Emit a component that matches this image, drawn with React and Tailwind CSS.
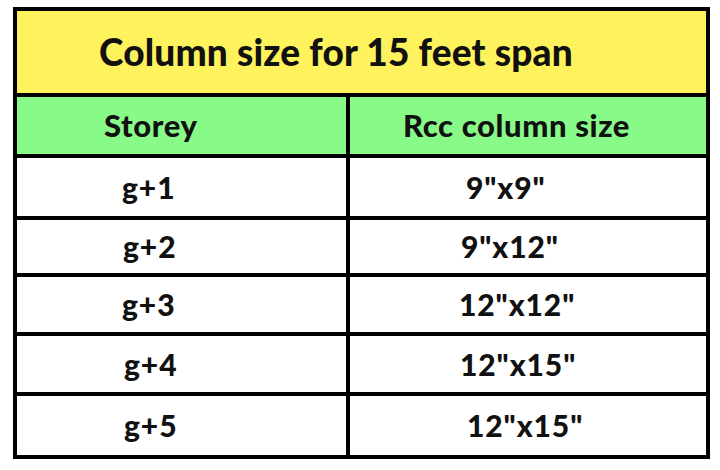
const rows = [
  { storey: "g+1", size: '9"x9"', h: "h-[62px]", p1: "pl-[105px]", p2: "pl-[116px]" },
  { storey: "g+2", size: '9"x12"', h: "h-[57px]", p1: "pl-[106px]", p2: "pl-[111px]" },
  { storey: "g+3", size: '12"x12"', h: "h-[59px]", p1: "pl-[105px]", p2: "pl-[109px]" },
  { storey: "g+4", size: '12"x15"', h: "h-[60px]", p1: "pl-[107px]", p2: "pl-[110px]" },
  { storey: "g+5", size: '12"x15"', h: "h-[59px]", p1: "pl-[107px]", p2: "pl-[117px]" },
];

const App = () => {
  return (
    <div className="w-[720px] h-[470px] bg-white pt-[7px] pl-[13px] font-['Lato',sans-serif] font-black text-[#111]">
      <div className="w-[697px] border-4 border-black flex flex-col">

        {/* Title */}
        <div className="h-[86px] bg-[#fff35d] border-b-4 border-black flex items-center pl-[82px] text-[37px] tracking-[0.005em]">
          Column size for 15 feet span
        </div>

        {/* Header */}
        <div className="h-[61px] bg-[#87fa87] border-b-4 border-black flex text-[31px] tracking-[0.02em]">
          <div className="w-[333px] border-r-4 border-black flex items-center pl-[87px]">Storey</div>
          <div className="flex-1 flex items-center pl-[53px]">Rcc column size</div>
        </div>

        {/* Rows */}
        {rows.map((row, index) => (
          <div
            key={index}
            className={`${row.h} flex text-[30px] tracking-[0.03em] ${index < rows.length - 1 ? "border-b-4 border-black" : ""}`}
          >
            <div className={`w-[333px] border-r-4 border-black flex items-center ${row.p1}`}>{row.storey}</div>
            <div className={`flex-1 flex items-center ${row.p2}`}>{row.size}</div>
          </div>
        ))}

      </div>
    </div>
  );
};

export default App;
